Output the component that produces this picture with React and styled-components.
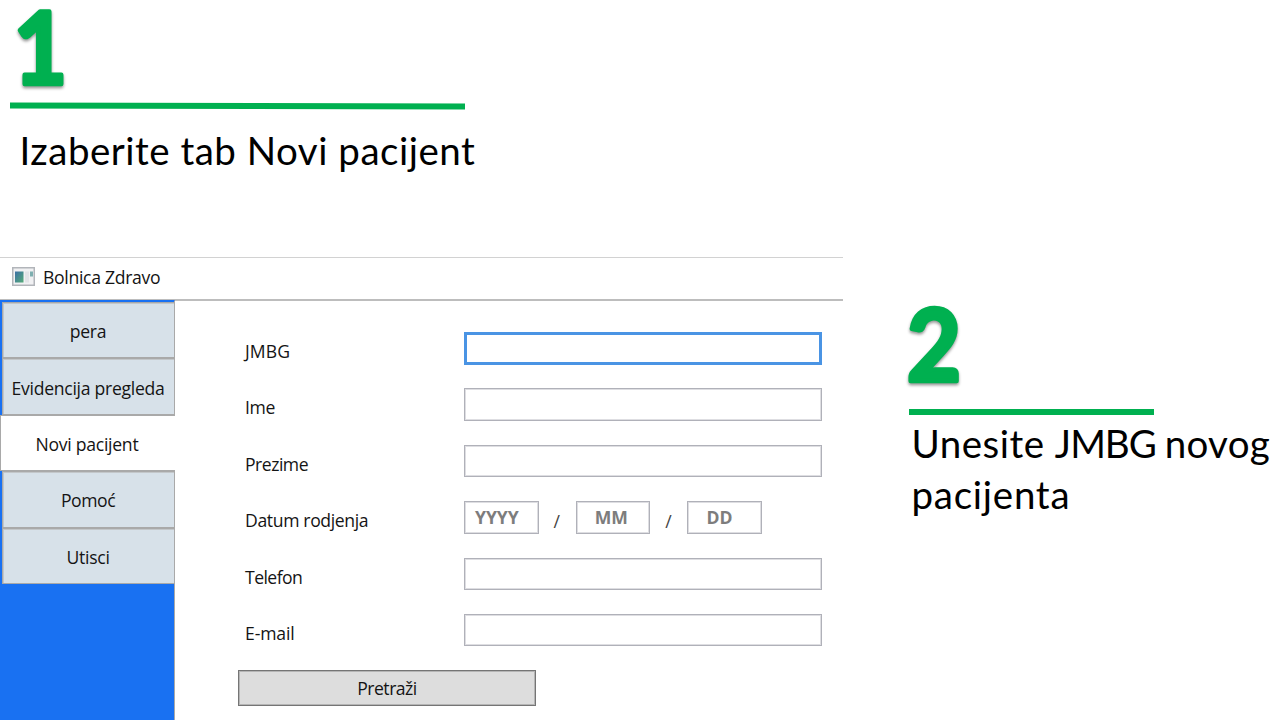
import React from "react";
import styled, { createGlobalStyle } from "styled-components";

const GlobalStyle = createGlobalStyle`
  * { box-sizing: border-box; }
  body { margin: 0; background: #fff; overflow: hidden; }
`;

const ui = `"Open Sans", "Noto Sans", sans-serif`;
const slide = `Lato, "Open Sans", sans-serif`;

const Page = styled.main`
  display: grid;
  grid-template-columns: 843px 1fr;
  width: 1280px;
  height: 720px;
  overflow: hidden;
  background: #fff;
`;

const Column = styled.div`
  display: flex;
  flex-direction: column;
`;

const Step = styled.section`
  display: flex;
  flex-direction: column;
  align-items: flex-start;
  height: ${(p) => p.$height || "auto"};
  padding: ${(p) => p.$padding};
`;

const Digit = styled.svg`
  display: block;
  width: 70px;
  height: ${(p) => p.$height || "95px"};
  overflow: visible;
  filter: drop-shadow(0 2px 1.5px rgba(0, 0, 0, 0.42));

  text {
    font: 700 99px ${slide};
    fill: #00b050;
    stroke: #00b050;
    stroke-width: 4.5px;
    stroke-linejoin: round;
  }
`;

const Rule = styled.div`
  width: ${(p) => p.$width};
  height: 6px;
  background: #00b050;
  transform: skewY(${(p) => p.$skew || "0deg"});
`;

const Caption = styled.p`
  margin: ${(p) => p.$margin};
  font: 400 38.5px/51px ${slide};
  color: #000;
  white-space: nowrap;
`;

const Word = styled.span`
  letter-spacing: ${(p) => p.$tracking};
`;

const Window = styled.section`
  display: flex;
  flex-direction: column;
  height: 463px;
  border-top: 1px solid #d2d2d2;
  font: 400 17.6px/24px ${ui};
  color: #141414;
`;

const TitleBar = styled.header`
  display: flex;
  align-items: center;
  gap: 8.5px;
  height: 43px;
  padding: 0 0 3px 11.5px;
  border-bottom: 2px solid #bdbdbd;
`;

const AppIcon = styled.svg`
  width: 23px;
  height: 19px;
  margin-top: -1px;
`;

const Text = styled.span`
  display: inline-block;
  white-space: nowrap;
  letter-spacing: ${(p) => p.$tracking || "-0.36px"};
`;

const Body = styled.div`
  display: flex;
  flex: 1;
`;

const Sidebar = styled.nav`
  width: 175px;
  margin-top: -1px;
  padding-top: 1px;
  background: #1971f2;
  border-top: 1px solid #1971f2;
  border-right: 1px solid #a9a9a9;
`;

const Tab = styled.div`
  display: flex;
  align-items: center;
  justify-content: center;
  height: 56.4px;
  margin-left: ${(p) => (p.$active ? "0" : "2px")};
  margin-right: ${(p) => (p.$active ? "-1px" : "0")};
  padding: ${(p) => (p.$active ? "2px 2px 0 0" : "2px 1px 0 0")};
  background: ${(p) => (p.$active ? "#fff" : "#d7e1e9")};
  border: 1px solid #a9a9a9;
  border-right: 0;
  box-shadow: ${(p) => (p.$active ? "none" : "inset 1px 1px 0 #c3c7ca")};
`;

const Form = styled.form`
  flex: 1;
  padding: 31px 0 0 63px;
`;

const Field = styled.div`
  display: grid;
  grid-template-columns: 219.5px 1fr;
  height: 56.4px;
  padding-left: 6.5px;
`;

const Label = styled.label`
  padding: 7px 0 0 0.5px;
`;

const Inputs = styled.div`
  display: flex;
  align-items: flex-start;
`;

const Box = styled.div`
  width: ${(p) => p.$width || "358px"};
  height: 32.5px;
  padding: 3px 0 0 ${(p) => p.$inset || "0"};
  border: ${(p) => (p.$focus ? "3px solid #4a94e4" : "1px solid #b0b1b9")};
  box-shadow: ${(p) => (p.$focus ? "none" : "inset 0 0 0 1px #dedee2")};
  font-weight: 700;
  color: #7d7d7d;
`;

const Slash = styled.span`
  width: 37px;
  padding: 8px 1px 0 0;
  text-align: center;
  color: #444;
`;

const Button = styled.div`
  display: flex;
  align-items: center;
  justify-content: center;
  width: 298px;
  height: 36px;
  background: #ddd;
  border: 1px solid #757575;
  box-shadow: inset 0 0 0 1px #b5b5b5;
`;

const tabs = ["pera", "Evidencija pregleda", "Novi pacijent", "Pomoć", "Utisci"];

function DateInputs() {
  return (
    <Inputs>
      <Box $width="74.7px" $inset="10px"><Text $tracking="-0.1px">YYYY</Text></Box>
      <Slash>/</Slash>
      <Box $width="74.7px" $inset="18px"><Text $tracking="0px">MM</Text></Box>
      <Slash>/</Slash>
      <Box $width="74.7px" $inset="18px"><Text $tracking="0px">DD</Text></Box>
    </Inputs>
  );
}

const fields = [
  { label: "JMBG", focus: true, tracking: "0.1px" },
  { label: "Ime" },
  { label: "Prezime", tracking: "-0.5px" },
  { label: "Datum rodjenja" },
  { label: "Telefon", tracking: "-0.55px" },
  { label: "E-mail", tracking: "-0.15px" },
];

export default function App() {
  return (
    <Page>
      <GlobalStyle />
      <Column>
        <Step $height="257px" $padding="7px 0 0 10px">
          <Digit $height="96px"><text x="4" y="77" transform="scale(0.93 1)">1</text></Digit>
          <Rule $width="455px" $skew="0.14deg" />
          <Caption $margin="16px 0 0 9.5px"><Word $tracking="0.5px">Izaberite tab Novi pacijent</Word></Caption>
        </Step>
        <Window>
          <TitleBar>
            <AppIcon viewBox="0 0 23 19">
              <defs>
                <linearGradient id="pane" x1="0" y1="0" x2="1" y2="1">
                  <stop offset="0" stopColor="#3b6fa5" />
                  <stop offset="1" stopColor="#55ab78" />
                </linearGradient>
              </defs>
              <rect x="0.75" y="0.75" width="21.5" height="17.5" fill="#f1f1f3" stroke="#b2b5ba" strokeWidth="1.5" />
              <rect x="3" y="4.5" width="8.5" height="11" fill="url(#pane)" />
              <rect x="13" y="4.5" width="4" height="11" fill="#e2e3e7" />
              <rect x="18" y="4.5" width="3" height="5" fill="#7eafb0" />
            </AppIcon>
            <Text $tracking="-0.3px">Bolnica Zdravo</Text>
          </TitleBar>
          <Body>
            <Sidebar>
              {tabs.map((name) => (
                <Tab key={name} $active={name === "Novi pacijent"}>
                  <Text $tracking={name === "Pomoć" ? "-0.45px" : "-0.28px"}>{name}</Text>
                </Tab>
              ))}
            </Sidebar>
            <Form>
              {fields.map((f) => (
                <Field key={f.label}>
                  <Label><Text $tracking={f.tracking}>{f.label}</Text></Label>
                  {f.label === "Datum rodjenja" ? <DateInputs /> : <Inputs><Box $focus={f.focus} /></Inputs>}
                </Field>
              ))}
              <Button><Text $tracking="-0.5px">Pretraži</Text></Button>
            </Form>
          </Body>
        </Window>
      </Column>
      <Column>
        <Step $padding="304px 0 0 66px">
          <Digit $height="105px"><text x="-2" y="77" transform="scale(0.94 1)">2</text></Digit>
          <Rule $width="245px" />
          <Caption $margin="3px 0 0 2.5px">
            <Word $tracking="0.5px">Unesite </Word>
            <Word $tracking="-1px">JMBG </Word>
            <Word $tracking="0.3px">novog</Word>
            <br />
            <Word $tracking="0.75px">pacijenta</Word>
          </Caption>
        </Step>
      </Column>
    </Page>
  );
}
